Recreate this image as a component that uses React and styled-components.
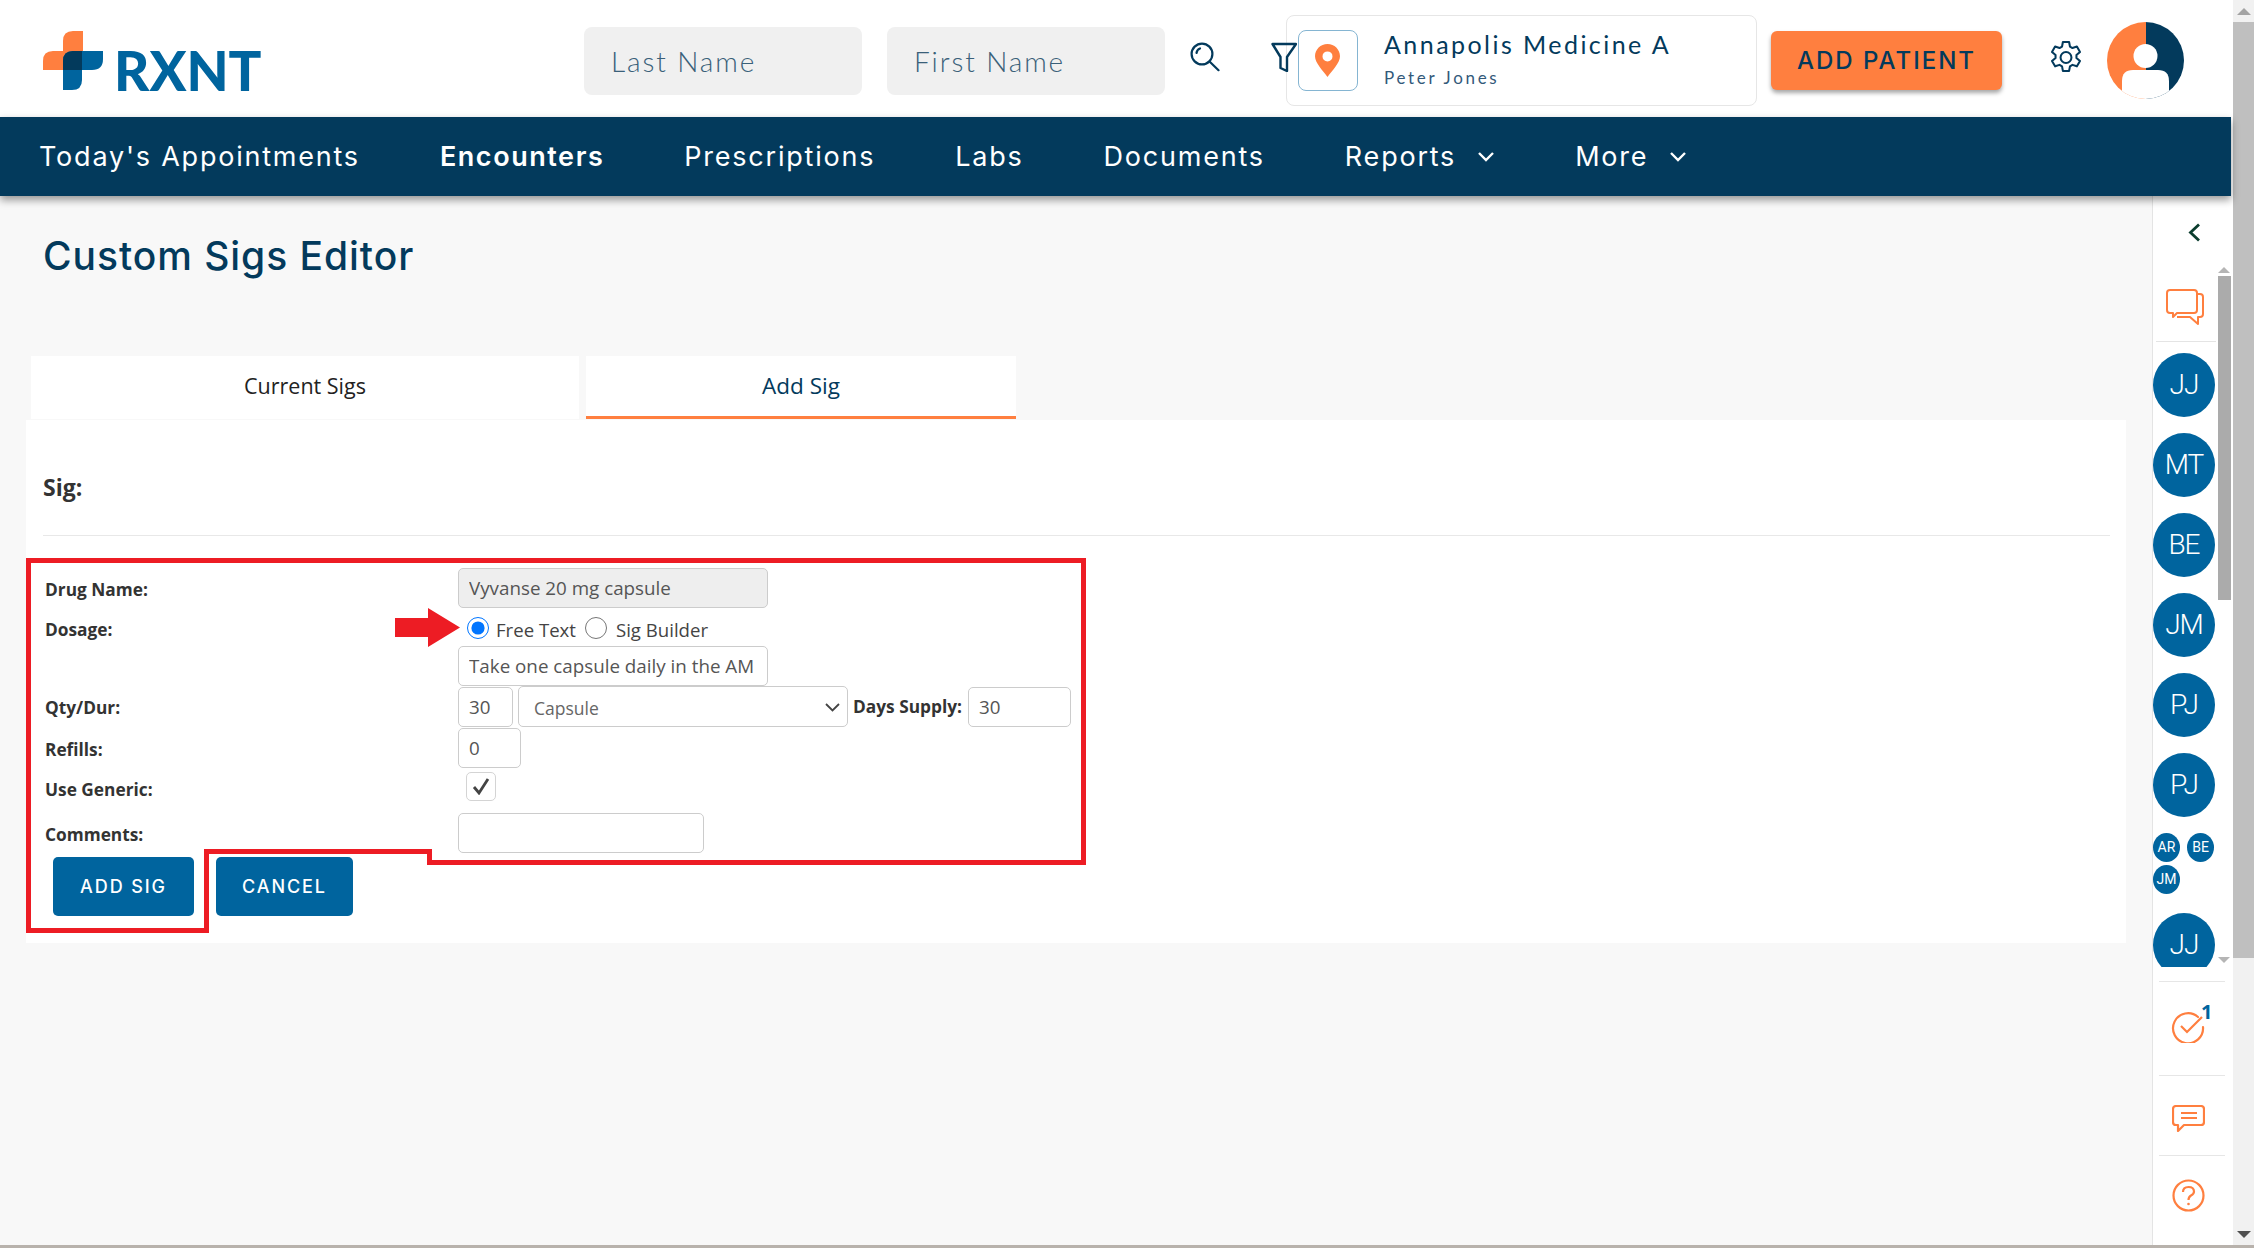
import React from "react";
import styled, { createGlobalStyle } from "styled-components";

const navy = "#033a5c";
const blue = "#00649e";
const orange = "#ff7f3f";

const GlobalStyle = createGlobalStyle`
  html, body { margin: 0; padding: 0; height: 100%; overflow: hidden; background: #f8f8f8; }
  body { font-family: "Open Sans", "Liberation Sans", sans-serif; }
  * { box-sizing: border-box; }
`;

const Page = styled.div`
  display: flex;
  width: 2254px;
  height: 1248px;
  border-bottom: 3px solid #b8b2ac;
`;

const Main = styled.div`
  display: flex;
  flex-direction: column;
  width: 2231px;
  height: 100%;
`;

/* header */
const Header = styled.header`
  display: flex;
  align-items: flex-start;
  height: 117px;
  background: #fff;
  flex: none;
`;

const Logo = styled.div`
  display: flex;
  align-items: flex-end;
  margin: 31px 0 0 43px;
  width: 541px;
  flex: none;
`;

const LogoText = styled.span`
  font-family: "Lato", sans-serif;
  font-weight: 900;
  font-size: 54.5px;
  line-height: 40px;
  height: 40px;
  margin: 0 0 0 11px;
  color: ${blue};
  letter-spacing: 0;
`;

const SearchInput = styled.input`
  width: 278px;
  height: 68px;
  margin: 27px 25px 0 0;
  padding: 0 27px;
  border: 0;
  border-radius: 8px;
  background: #f0f0f0;
  font-family: "Lato", sans-serif;
  font-size: 28px;
  font-weight: 300;
  letter-spacing: 1.9px;
  outline: none;
  &::placeholder { color: #3a6079; opacity: 1; }
`;

const HeadIcon = styled.svg`
  flex: none;
  margin: ${p => p.$margin};
  color: ${navy};
  position: relative;
  z-index: ${p => p.$z || 0};
`;

const LocationCard = styled.div`
  display: flex;
  width: 471px;
  height: 91px;
  margin: 15px 14px 0 0;
  padding: 14px 0 0 11px;
  border: 1px solid #e6e6e6;
  border-radius: 8px;
  background: #fff;
  flex: none;
`;

const PinBox = styled.div`
  display: flex;
  align-items: center;
  justify-content: center;
  padding-right: 2px;
  width: 60px;
  height: 61px;
  border: 1px solid #85b5d2;
  border-radius: 8px;
  flex: none;
`;

const LocationText = styled.div`
  display: flex;
  flex-direction: column;
  margin-left: 26px;
  color: ${navy};
  font-family: "Lato", sans-serif;
`;

const LocationName = styled.span`
  font-size: 25px;
  line-height: 30px;
  letter-spacing: 2.45px;
  margin-top: -1px;
`;

const LocationUser = styled.span`
  font-size: 17px;
  line-height: 20px;
  letter-spacing: 2.7px;
  margin-top: 9px;
  color: #33597a;
`;

const AddPatient = styled.button`
  width: 231px;
  height: 59px;
  margin: 31px 48px 0 0;
  border: 0;
  border-radius: 6px;
  background: ${orange};
  box-shadow: 0 3px 4px rgba(0, 0, 0, 0.35);
  color: ${navy};
  font-family: "Inter", sans-serif;
  font-size: 24px;
  font-weight: 500;
  letter-spacing: 2px;
  flex: none;
`;

/* nav */
const Nav = styled.nav`
  display: flex;
  align-items: center;
  gap: 80px;
  height: 79px;
  padding-left: 39px;
  background: ${navy};
  box-shadow: 0 4px 8px rgba(0, 0, 0, 0.4);
  position: relative;
  z-index: 2;
  flex: none;
`;

const NavItem = styled.a`
  display: flex;
  align-items: center;
  gap: 21px;
  color: #fff;
  font-family: "Inter", sans-serif;
  font-size: 27px;
  font-weight: ${p => (p.$active ? 600 : 400)};
  letter-spacing: ${p => (p.$active ? 1.55 : 1.78)}px;
  white-space: nowrap;
`;

/* body */
const Body = styled.div`
  display: flex;
  flex: 1;
  min-height: 0;
`;

const Content = styled.main`
  flex: 1;
  min-width: 0;
  padding: 0 26px 0 26px;
`;

const Title = styled.h1`
  margin: 37px 0 0 17px;
  height: 123px;
  color: ${navy};
  font-family: "Inter", sans-serif;
  font-size: 39px;
  line-height: 46px;
  font-weight: 500;
  letter-spacing: 0.95px;
`;

const Tabs = styled.div`
  display: flex;
  gap: 7px;
  margin-left: 5px;
  height: 64px;
`;

const Tab = styled.div`
  display: flex;
  align-items: center;
  justify-content: center;
  width: ${p => p.$w}px;
  height: 63px;
  padding-bottom: 2px;
  background: #fff;
  font-size: ${p => (p.$active ? 22.5 : 21.5)}px;
  color: ${p => (p.$active ? navy : "#222")};
  border-bottom: 3px solid ${p => (p.$active ? orange : "#fff")};
`;

const Panel = styled.section`
  position: relative;
  height: 523px;
  background: #fff;
  padding: 0 16px 0 17px;
`;

const SigHead = styled.div`
  display: flex;
  align-items: center;
  height: 116px;
  padding-top: 18px;
  border-bottom: 1px solid #e8e8e8;
  font-size: 23px;
  font-weight: 700;
  color: #333;
`;

const Form = styled.form`
  margin: 32px 0 0 2px;
`;

const Row = styled.div`
  display: grid;
  grid-template-columns: 413px 1fr;
  align-items: center;
  height: ${p => p.$h}px;
`;

const Label = styled.label`
  font-size: 17.3px;
  font-weight: 700;
  color: #333;
  white-space: nowrap;
  padding-top: ${p => p.$pt ?? 2}px;
`;

const Controls = styled.div`
  display: flex;
  align-items: center;
`;

const Field = styled.input`
  width: ${p => p.$w}px;
  height: 40px;
  margin-left: ${p => p.$ml || 0}px;
  padding: 0 10px;
  border: 1px solid #ccc;
  border-radius: 5px;
  background: ${p => (p.$disabled ? "#eee" : "#fff")};
  color: #555;
  font-family: "Open Sans", sans-serif;
  font-size: 18.8px;
  outline: none;
  flex: none;
`;

const Radio = styled.input`
  width: 22px;
  height: 22px;
  margin: ${p => p.$margin};
  accent-color: #0075ff;
  flex: none;
`;

const RadioText = styled.span`
  font-size: 18.6px;
  color: #444;
  margin-top: 5px;
  white-space: nowrap;
`;

const SelectWrap = styled.div`
  position: relative;
  width: 330px;
  height: 41px;
  margin: 0 5px;
  flex: none;
  color: #444;
  svg {
    position: absolute;
    right: 8px;
    top: 17px;
    pointer-events: none;
  }
`;

const UnitSelect = styled.select`
  width: 100%;
  height: 100%;
  padding: 2px 0 0 15px;
  appearance: none;
  border: 1px solid #ccc;
  border-radius: 5px;
  background: #fff;
  color: #666;
  font-family: "Open Sans", sans-serif;
  font-size: 17.5px;
`;

const CheckBox = styled.span`
  display: flex;
  align-items: center;
  justify-content: center;
  width: 30px;
  height: 29px;
  margin: 0 0 6px 8px;
  border: 1px solid #d4d4d4;
  border-radius: 5px;
  color: #444;
`;

const Buttons = styled.div`
  display: flex;
  gap: 22px;
  margin: 3px 0 0 8px;
`;

const ActionButton = styled.button`
  height: 59px;
  width: ${p => p.$w}px;
  border: 0;
  border-radius: 5px;
  background: ${blue};
  color: #fff;
  font-family: "Inter", sans-serif;
  font-size: 18px;
  font-weight: 500;
  letter-spacing: 1.9px;
`;

const Annotation = styled.svg`
  position: absolute;
  left: 0;
  top: 138px;
  pointer-events: none;
`;

/* right rail */
const Rail = styled.aside`
  display: flex;
  flex-direction: column;
  width: 79px;
  background: #fff;
  border-left: 1px solid #e4e4e4;
  flex: none;
`;

const RailToggle = styled.div`
  display: flex;
  justify-content: flex-end;
  height: 69px;
  padding: 27px 30px 0 0;
  color: #0b3d2e;
`;

const RailScroll = styled.div`
  display: flex;
  height: 702px;
  margin-bottom: 14px;
`;

const RailList = styled.div`
  width: 63px;
  height: 100%;
  overflow: hidden;
  flex: none;
`;

const ChatSlot = styled.div`
  display: flex;
  justify-content: center;
  height: 77px;
  margin-left: 3px;
  padding: 24px 2px 0 0;
  border-bottom: 1px solid #e4e4e4;
  margin-bottom: 11px;
`;

const Avatar = styled.div`
  display: flex;
  align-items: center;
  justify-content: center;
  width: 62px;
  height: 64px;
  margin-bottom: 16px;
  border-radius: 50%;
  background: ${blue};
  color: #fff;
  font-family: "Roboto", sans-serif;
  font-weight: 300;
  font-size: 28px;
  letter-spacing: -1px;
`;

const MiniGroup = styled.div`
  display: flex;
  flex-wrap: wrap;
  align-content: flex-start;
  column-gap: 7px;
  row-gap: 3px;
  width: 62px;
  height: 80px;
  margin-top: 3px;
`;

const MiniAvatar = styled(Avatar)`
  width: 27px;
  height: 29px;
  margin: 0;
  font-size: 14px;
  font-weight: 400;
  letter-spacing: 0;
`;

const RailBar = styled.div`
  display: flex;
  flex-direction: column;
  align-items: center;
  width: 14px;
  margin-left: 1px;
`;

const Arrow = styled.span`
  width: 0;
  height: 0;
  border-left: ${p => p.$size}px solid transparent;
  border-right: ${p => p.$size}px solid transparent;
  ${p => (p.$up ? "border-bottom" : "border-top")}: ${p => p.$size}px solid ${p => p.$color};
  margin: ${p => p.$margin};
`;

const RailThumb = styled.div`
  width: 13px;
  height: 324px;
  background: #ababab;
`;

const RailSpacer = styled.div`
  flex: 1;
`;

const RailAction = styled.div`
  display: flex;
  justify-content: center;
  height: ${p => p.$h}px;
  margin: 0 6px;
  padding: ${p => p.$pt}px 8px 0 0;
  border-top: 1px solid #e6e6e6;
  position: relative;
`;

const Badge = styled.span`
  position: absolute;
  left: 42px;
  top: 20px;
  color: ${blue};
  font-size: 20px;
  font-weight: 700;
  line-height: 20px;
`;

/* page scrollbar */
const PageBar = styled.div`
  display: flex;
  flex-direction: column;
  align-items: center;
  width: 23px;
  height: 100%;
  background: #f1f1f1;
  border-left: 2px solid #fff;
`;

const PageThumb = styled.div`
  width: 100%;
  height: 936px;
  margin-top: 7px;
  background: #bfbfbf;
`;

const BrandMark = () => (
  <svg width="60" height="59" viewBox="0 0 60 59">
    <path d="M40 0H30Q20 0 20 10V20H10Q0 20 0 30V39H40Z" fill={orange} />
    <path d="M30 20H60V28Q60 39 49 39H39V49Q39 59 29 59H20V30Q20 20 30 20Z" fill={blue} />
    <path d="M30 20H39V39H20V30Q20 20 30 20Z" fill={navy} />
  </svg>
);

const SearchIcon = () => (
  <HeadIcon $margin="42px 51px 0 0" width="30" height="30" viewBox="0 0 30 30" fill="none" stroke="currentColor" strokeWidth="2.2">
    <circle cx="12" cy="12" r="10.4" />
    <path d="M19.5 19.5L28.5 28.2" strokeLinecap="round" />
    <path d="M6.5 11Q7 7.5 10 6.5" strokeLinecap="round" />
  </HeadIcon>
);

const FilterIcon = () => (
  <HeadIcon $z={1} $margin="42px -11px 0 0" width="26" height="30" viewBox="0 0 26 30" fill="none" stroke="currentColor" strokeWidth="2.4">
    <path d="M1.5 2H25L16 15V29L9.5 26V15Z" strokeLinejoin="round" />
  </HeadIcon>
);

const PinIcon = () => (
  <svg width="25" height="33" viewBox="0 0 25 33">
    <path fillRule="evenodd" fill={orange} d="M12.5 0C5.6 0 0 5.5 0 12.2 0 19 8 26.500 12.500 33 17 26.500 25 19 25 12.200 25 5.500 19.400 0 12.500 0ZM12.500 7.400A5 5 0 1 1 12.500 17.400 5 5 0 0 1 12.500 7.400Z" />
  </svg>
);

const GearIcon = () => (
  <HeadIcon $margin="41px 25px 0 0" width="32" height="33" viewBox="1.5 0.8 21 22.4" fill="none" stroke="currentColor" strokeWidth="1.4" strokeLinejoin="round">
    <path d="M9.9 1.500h4.200l.6 3.100 1.700 1 3-1 2.100 3.600-2.400 2.100v2l2.400 2.100-2.100 3.600-3-1-1.700 1-.6 3.100H9.900l-.6-3.100-1.700-1-3 1-2.100-3.600 2.400-2.100v-2L2.500 8.200l2.100-3.600 3 1 1.700-1z" />
    <circle cx="12" cy="12" r="3.700" />
  </HeadIcon>
);

const UserAvatar = () => (
  <HeadIcon $margin="22px 0 0 0" width="77" height="77" viewBox="0 0 77 77">
    <defs>
      <clipPath id="userClip"><circle cx="38.500" cy="38.500" r="38.500" /></clipPath>
    </defs>
    <g clipPath="url(#userClip)">
      <rect width="39" height="77" fill={orange} />
      <rect x="39" width="38" height="77" fill={navy} />
      <circle cx="38.500" cy="34" r="12" fill="#fff" />
      <path d="M15 77V59Q15 48 26 48H51Q62 48 62 59V77Z" fill="#fff" />
    </g>
  </HeadIcon>
);

const Chevron = () => (
  <svg width="18" height="11" viewBox="0 0 18 11" fill="none" stroke="#fff" strokeWidth="2.4">
    <path d="M2 2L9 9L16 2" />
  </svg>
);

const ChatsIcon = () => (
  <svg width="38" height="36" viewBox="0 0 38 36" fill="none" stroke={orange} strokeWidth="2" strokeLinejoin="round">
    <path d="M4 1H28Q31 1 31 4V21Q31 24 28 24H11L7 28V24H4Q1 24 1 21V4Q1 1 4 1Z" />
    <path d="M31 5H34Q37 5 37 8V25Q37 28 34 28H32V35L24 28H11" />
  </svg>
);

const TaskIcon = () => (
  <svg width="34" height="32" viewBox="0 0 34 32" fill="none" stroke={orange} strokeWidth="2.200">
    <path d="M27 6A15 15 0 1 0 32 16" strokeLinecap="round" />
    <path d="M10 15L16 21L31 6" />
  </svg>
);

const MessageIcon = () => (
  <svg width="33" height="27" viewBox="0 0 33 27" fill="none" stroke={orange} strokeWidth="2.200" strokeLinejoin="round">
    <path d="M4 1H29Q32 1 32 4V17Q32 20 29 20H12L6 26V20H4Q1 20 1 17V4Q1 1 4 1Z" />
    <path d="M9 8H25M9 13H25" />
  </svg>
);

const HelpIcon = () => (
  <svg width="33" height="33" viewBox="0 0 33 33" fill="none" stroke={orange} strokeWidth="2.200">
    <circle cx="16.500" cy="16.500" r="15" />
    <path d="M11 13Q11 8 16.500 8 22 8 22 12.500 22 15 19 16.500 16.500 18 16.500 21" />
    <circle cx="16.500" cy="25" r="1.300" fill={orange} stroke="none" />
  </svg>
);

const navItems = ["Today's Appointments", "Encounters", "Prescriptions", "Labs", "Documents", "Reports", "More"];
const bigAvatars = ["JJ", "MT", "BE", "JM", "PJ", "PJ"];

export default function App() {
  return (
    <>
      <GlobalStyle />
      <Page>
        <Main>
          <Header>
            <Logo>
              <BrandMark />
              <LogoText>RXNT</LogoText>
            </Logo>
            <SearchInput placeholder="Last Name" />
            <SearchInput placeholder="First Name" />
            <SearchIcon />
            <FilterIcon />
            <LocationCard>
              <PinBox><PinIcon /></PinBox>
              <LocationText>
                <LocationName>Annapolis Medicine A</LocationName>
                <LocationUser>Peter Jones</LocationUser>
              </LocationText>
            </LocationCard>
            <AddPatient>ADD PATIENT</AddPatient>
            <GearIcon />
            <UserAvatar />
          </Header>
          <Nav>
            {navItems.map(item => (
              <NavItem key={item} $active={item === "Encounters"}>
                {item}
                {(item === "Reports" || item === "More") && <Chevron />}
              </NavItem>
            ))}
          </Nav>
          <Body>
            <Content>
              <Title>Custom Sigs Editor</Title>
              <Tabs>
                <Tab $w={548}>Current Sigs</Tab>
                <Tab $w={430} $active>Add Sig</Tab>
              </Tabs>
              <Panel>
                <SigHead>Sig:</SigHead>
                <Form>
                  <Row $h={40}>
                    <Label>Drug Name:</Label>
                    <Controls><Field $w={310} $disabled readOnly value="Vyvanse 20 mg capsule" /></Controls>
                  </Row>
                  <Row $h={38}>
                    <Label $pt={5}>Dosage:</Label>
                    <Controls>
                      <Radio type="radio" name="dose" defaultChecked $margin="2px 7px 0 9px" />
                      <RadioText>Free Text</RadioText>
                      <Radio type="radio" name="dose" $margin="2px 9px 0 9px" />
                      <RadioText>Sig Builder</RadioText>
                    </Controls>
                  </Row>
                  <Row $h={40}>
                    <span />
                    <Controls><Field $w={310} readOnly value="Take one capsule daily in the AM" /></Controls>
                  </Row>
                  <Row $h={41}>
                    <Label>Qty/Dur:</Label>
                    <Controls>
                      <Field $w={55} readOnly value="30" />
                      <SelectWrap>
                        <UnitSelect defaultValue="Capsule"><option>Capsule</option></UnitSelect>
                        <svg width="15" height="9" viewBox="0 0 15 9" fill="none" stroke="currentColor" strokeWidth="1.800">
                          <path d="M1 1L7.500 7.500L14 1" />
                        </svg>
                      </SelectWrap>
                      <Label $pt={0}>Days Supply:</Label>
                      <Field $w={103} $ml={6} readOnly value="30" />
                    </Controls>
                  </Row>
                  <Row $h={41}>
                    <Label $pt={4}>Refills:</Label>
                    <Controls><Field $w={63} readOnly value="0" /></Controls>
                  </Row>
                  <Row $h={43}>
                    <Label $pt={0}>Use Generic:</Label>
                    <Controls>
                      <CheckBox>
                        <svg width="18" height="17" viewBox="0 0 18 17" fill="none" stroke="currentColor" strokeWidth="2.800">
                          <path d="M2 9L7 15L16 1" />
                        </svg>
                      </CheckBox>
                    </Controls>
                  </Row>
                  <Row $h={43}>
                    <Label $pt={4}>Comments:</Label>
                    <Controls><Field $w={246} readOnly value="" /></Controls>
                  </Row>
                  <Buttons>
                    <ActionButton type="button" $w={141}>ADD SIG</ActionButton>
                    <ActionButton type="button" $w={137}>CANCEL</ActionButton>
                  </Buttons>
                </Form>
                <Annotation width="1060" height="375" viewBox="0 0 1060 375">
                  <path d="M2.500 2.500H1057.500V304.500H403.500V293.500H180.500V372.500H2.500Z" fill="none" stroke="#ed1c24" strokeWidth="5" />
                  <path d="M369 60H402V50L434 69.500L402 89V79H369Z" fill="#ed1c24" />
                </Annotation>
              </Panel>
            </Content>
            <Rail>
              <RailToggle>
                <svg width="13" height="19" viewBox="0 0 13 19" fill="none" stroke="currentColor" strokeWidth="2.800">
                  <path d="M11 1.500L2.500 9.500L11 17.500" />
                </svg>
              </RailToggle>
              <RailScroll>
                <RailList>
                  <ChatSlot><ChatsIcon /></ChatSlot>
                  {bigAvatars.map((name, i) => <Avatar key={i}>{name}</Avatar>)}
                  <MiniGroup>
                    <MiniAvatar>AR</MiniAvatar>
                    <MiniAvatar>BE</MiniAvatar>
                    <MiniAvatar>JM</MiniAvatar>
                  </MiniGroup>
                  <Avatar>JJ</Avatar>
                </RailList>
                <RailBar>
                  <Arrow $up $size={6} $color="#b5b5b5" $margin="2px 0 3px" />
                  <RailThumb />
                  <RailSpacer />
                  <Arrow $size={6} $color="#b5b5b5" $margin="0 0 4px" />
                </RailBar>
              </RailScroll>
              <RailAction $h={94} $pt={29}><TaskIcon /><Badge>1</Badge></RailAction>
              <RailAction $h={81} $pt={29}><MessageIcon /></RailAction>
              <RailAction $h={90} $pt={23}><HelpIcon /></RailAction>
            </Rail>
          </Body>
        </Main>
        <PageBar>
          <Arrow $up $size={7} $color="#a3a3a3" $margin="8px 0 0" />
          <PageThumb />
          <RailSpacer />
          <Arrow $size={7} $color="#505050" $margin="0 0 7px" />
        </PageBar>
      </Page>
    </>
  );
}
